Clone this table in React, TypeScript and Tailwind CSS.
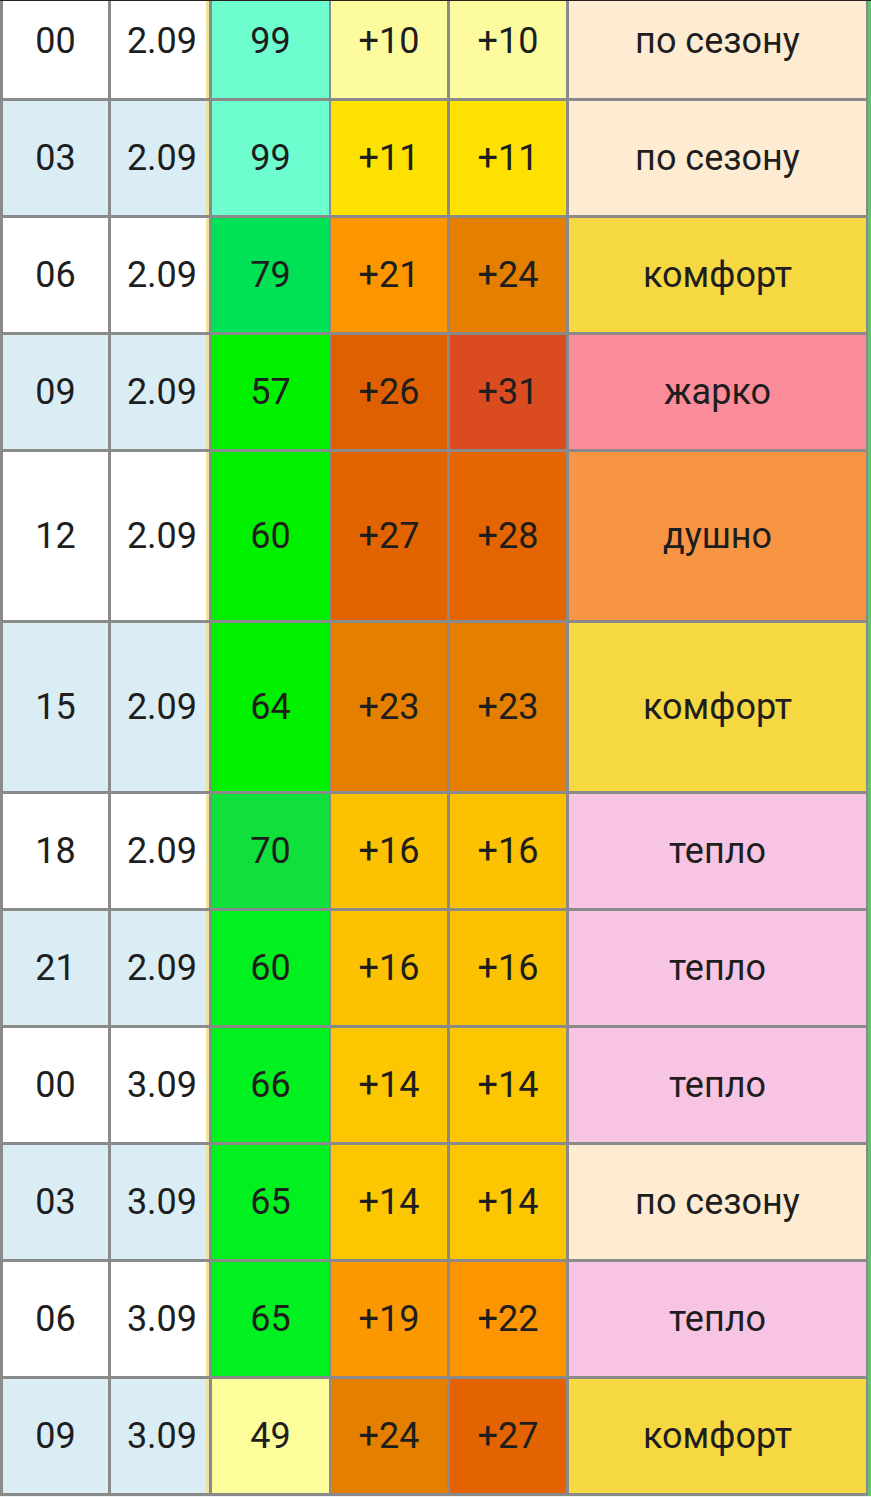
import React from "react";

type Row = {
  h: string;
  d: string;
  hum: string;
  humBg: string;
  t1: string;
  t1Bg: string;
  t2: string;
  t2Bg: string;
  c: string;
  cBg: string;
  height: string;
  first?: boolean;
};

const rows: Row[] = [
  { h: "00", d: "2.09", hum: "99", humBg: "bg-[#6efdcf]", t1: "+10", t1Bg: "bg-[#fcfc9e]", t2: "+10", t2Bg: "bg-[#fcfc9e]", c: "по сезону", cBg: "bg-[#fdecd2]", height: "h-[100px]", first: true },
  { h: "03", d: "2.09", hum: "99", humBg: "bg-[#6efdcf]", t1: "+11", t1Bg: "bg-[#fde100]", t2: "+11", t2Bg: "bg-[#fde100]", c: "по сезону", cBg: "bg-[#fdecd2]", height: "h-[117px]" },
  { h: "06", d: "2.09", hum: "79", humBg: "bg-[#00e156]", t1: "+21", t1Bg: "bg-[#fc9600]", t2: "+24", t2Bg: "bg-[#e57f00]", c: "комфорт", cBg: "bg-[#f6d843]", height: "h-[117px]" },
  { h: "09", d: "2.09", hum: "57", humBg: "bg-[#00f000]", t1: "+26", t1Bg: "bg-[#e05f00]", t2: "+31", t2Bg: "bg-[#db4b20]", c: "жарко", cBg: "bg-[#fb8d9b]", height: "h-[117px]" },
  { h: "12", d: "2.09", hum: "60", humBg: "bg-[#00f000]", t1: "+27", t1Bg: "bg-[#e26300]", t2: "+28", t2Bg: "bg-[#e46500]", c: "душно", cBg: "bg-[#f89545]", height: "h-[171px]" },
  { h: "15", d: "2.09", hum: "64", humBg: "bg-[#00f000]", t1: "+23", t1Bg: "bg-[#e57f00]", t2: "+23", t2Bg: "bg-[#e57f00]", c: "комфорт", cBg: "bg-[#f6d843]", height: "h-[171px]" },
  { h: "18", d: "2.09", hum: "70", humBg: "bg-[#10e03c]", t1: "+16", t1Bg: "bg-[#fcc100]", t2: "+16", t2Bg: "bg-[#fcc100]", c: "тепло", cBg: "bg-[#f7c4e3]", height: "h-[117px]" },
  { h: "21", d: "2.09", hum: "60", humBg: "bg-[#00f020]", t1: "+16", t1Bg: "bg-[#fcc100]", t2: "+16", t2Bg: "bg-[#fcc100]", c: "тепло", cBg: "bg-[#f7c4e3]", height: "h-[117px]" },
  { h: "00", d: "3.09", hum: "66", humBg: "bg-[#00f020]", t1: "+14", t1Bg: "bg-[#fcc600]", t2: "+14", t2Bg: "bg-[#fcc600]", c: "тепло", cBg: "bg-[#f7c4e3]", height: "h-[117px]" },
  { h: "03", d: "3.09", hum: "65", humBg: "bg-[#00f020]", t1: "+14", t1Bg: "bg-[#fcc600]", t2: "+14", t2Bg: "bg-[#fcc600]", c: "по сезону", cBg: "bg-[#fdecd2]", height: "h-[117px]" },
  { h: "06", d: "3.09", hum: "65", humBg: "bg-[#00f020]", t1: "+19", t1Bg: "bg-[#fc9800]", t2: "+22", t2Bg: "bg-[#fc9500]", c: "тепло", cBg: "bg-[#f7c4e3]", height: "h-[117px]" },
  { h: "09", d: "3.09", hum: "49", humBg: "bg-[#fdfd9c]", t1: "+24", t1Bg: "bg-[#e57f00]", t2: "+27", t2Bg: "bg-[#e26300]", c: "комфорт", cBg: "bg-[#f6d843]", height: "h-[117px]" },
];

export default function App() {
  return (
    <div className="w-[871px] h-[1497px] overflow-hidden bg-[#eef2f4] text-[36px] leading-none text-[#1e1e1e] font-['Roboto','Noto_Sans',sans-serif]">
      <div className="h-px bg-[#2b211b]" />
      <div className="flex">
        <div className="w-[868px] flex flex-col border-l-[3px] border-[#8a8a8a]">
          {rows.map((r, i) => {
            const side = i % 2 === 0 ? "bg-white" : "bg-[#daedf5]";
            const pad = r.first ? "pb-[18px]" : "";
            return (
              <div key={i} className={`flex border-b-[3px] border-[#8a8a8a] ${r.height}`}>
                <div className={`w-[108px] border-r-[3px] border-[#8a8a8a] flex items-center justify-center ${side} ${pad}`}>
                  {r.h}
                </div>
                <div className={`w-[101px] border-r-[3px] border-[#8a8a8a] flex items-center justify-center pl-[4px] shadow-[inset_-3px_0_0_#efe3a0] ${side} ${pad}`}>
                  {r.d}
                </div>
                <div className={`w-[119px] border-r-[2px] border-[#8a8a8a] flex items-center justify-center ${r.humBg} ${pad}`}>
                  {r.hum}
                </div>
                <div className={`w-[119px] border-r-[3px] border-[#8a8a8a] flex items-center justify-center ${r.t1Bg} ${pad}`}>
                  {r.t1}
                </div>
                <div className={`w-[119px] border-r-[3px] border-[#8a8a8a] flex items-center justify-center ${r.t2Bg} ${pad}`}>
                  {r.t2}
                </div>
                <div className={`w-[299px] border-r-[2px] border-[#8a8a8a] flex items-center justify-center ${r.cBg} ${pad}`}>
                  {r.c}
                </div>
              </div>
            );
          })}
        </div>
        <div className="w-[3px] bg-[#63c36f]" />
      </div>
    </div>
  );
}
